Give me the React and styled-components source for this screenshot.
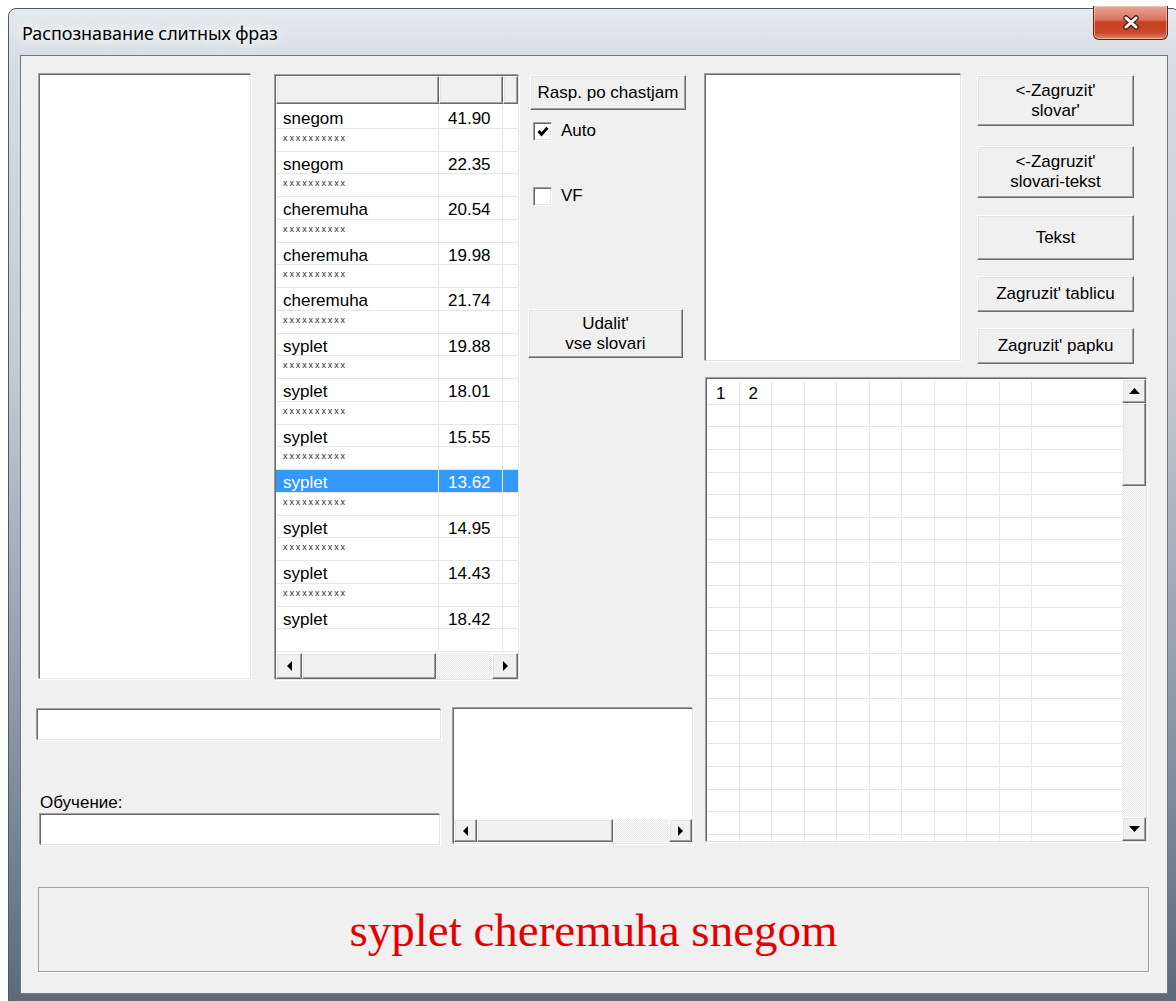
import React from 'react';
import styled, { createGlobalStyle, css } from 'styled-components';

const GlobalStyle = createGlobalStyle`
  html, body {
    margin: 0;
    padding: 0;
    background: #fff;
  }
  body {
    font-family: "Liberation Sans", Arial, sans-serif;
    color: #000;
  }
  * {
    box-sizing: border-box;
  }
`;

// classic 3D edges
const sunken = css`
  background: #fff;
  border: 1px solid;
  border-color: #696969 #e3e3e3 #e3e3e3 #696969;
  box-shadow: -1px -1px 0 #a0a0a0, 1px 1px 0 #fff;
`;

const raised = css`
  background: #f0f0f0;
  border: 1px solid;
  border-color: #fff #696969 #696969 #fff;
  box-shadow: inset -1px -1px 0 #a0a0a0, inset 1px 1px 0 #e3e3e3;
`;

const Screen = styled.div`
  width: 1176px;
  height: 1001px;
  overflow: hidden;
  padding: 8px 0 0 8px;
  background: #fff;
`;

const Window = styled.div`
  width: 1172px;
  height: 1000px;
  display: flex;
  flex-direction: column;
  padding: 0 11px;
  border: 1px solid #4e5a66;
  border-radius: 8px 8px 0 0;
  background: linear-gradient(
    180deg,
    #e6e9ed 0,
    #d7dce2 60px,
    #c3cad2 360px,
    #8d99a7 700px,
    #5a6878 1000px
  );
`;

const TitleBar = styled.div`
  height: 46px;
  flex: none;
  display: flex;
  align-items: center;
  justify-content: space-between;
  padding-left: 2px;
`;

const Caption = styled.div`
  font-family: "Noto Sans", "Open Sans", sans-serif;
  font-size: 18px;
  letter-spacing: -0.1px;
  color: #000;
  text-shadow: 0 0 8px #fff, 0 0 14px #fff, 0 0 20px #fff;
  margin-top: 2px;
`;

const CloseButton = styled.div`
  align-self: flex-start;
  margin-top: -3px;
  width: 75px;
  height: 34px;
  display: flex;
  align-items: center;
  justify-content: center;
  border: 1px solid #5c2418;
  border-top: none;
  border-radius: 0 0 6px 6px;
  background: linear-gradient(
    180deg,
    #e8a596 0,
    #d9775f 40%,
    #c73f22 50%,
    #c8472a 80%,
    #e08a6d 100%
  );
  box-shadow: inset 0 0 0 1px rgba(255, 220, 210, 0.55);
`;

const CloseGlyph = () => (
  <svg width="18" height="15" viewBox="0 0 18 15">
    <path d="M4 3 L14 12 M14 3 L4 12" stroke="#4a1c12" strokeWidth="5.5" strokeLinecap="round" />
    <path d="M4 3 L14 12 M14 3 L4 12" stroke="#fff" strokeWidth="3" strokeLinecap="round" />
  </svg>
);

const Client = styled.div`
  height: 939px;
  flex: none;
  display: flex;
  flex-direction: column;
  padding: 17px 0 0 15px;
  background: #f0f0f0;
  border: 1px solid #6d7884;
`;

const Main = styled.div`
  display: flex;
  gap: 10px;
`;

const LeftArea = styled.div`
  width: 658px;
  display: flex;
  flex-direction: column;
`;

const TopRow = styled.div`
  display: flex;
  align-items: flex-start;
`;

const ListBox = styled.div`
  ${sunken}
  width: ${(p) => p.$w}px;
  height: ${(p) => p.$h}px;
  margin: ${(p) => p.$mt || 0}px 0 0 ${(p) => p.$ml || 0}px;
  flex: none;
`;

/* word grid */

const WordGrid = styled.div`
  ${sunken}
  width: 244px;
  height: 605px;
  margin: 2px 0 0 24px;
  flex: none;
  display: flex;
  flex-direction: column;
  overflow: hidden;
`;

const GridHead = styled.div`
  display: flex;
  height: 28px;
  flex: none;
`;

const HeadCell = styled.div`
  ${raised}
  width: ${(p) => (p.$w ? `${p.$w}px` : 'auto')};
  flex: ${(p) => (p.$w ? 'none' : 1)};
`;

const GridBody = styled.div`
  flex: 1;
  padding-top: 2px;
  overflow: hidden;
`;

const GridRow = styled.div`
  display: flex;
  height: 22.75px;
`;

const WordCell = styled.div`
  width: ${(p) => (p.$w ? `${p.$w}px` : 'auto')};
  flex: ${(p) => (p.$w ? 'none' : 1)};
  border-right: ${(p) => (p.$w ? '1px solid #e6e6e6' : 'none')};
  border-bottom: 1px solid #e6e6e6;
  padding: 3px 0 0 ${(p) => p.$pad || 0}px;
  font-size: 17px;
  line-height: 20px;
  white-space: nowrap;
  overflow: hidden;
  background: ${(p) => (p.$sel ? '#3399ff' : '#fff')};
  color: ${(p) => (p.$sel ? '#fff' : '#000')};
`;

const Marks = styled.div`
  font-size: 9px;
  line-height: 10px;
  letter-spacing: 1.9px;
  color: #2a2a2a;
  margin-top: 1px;
`;

/* scroll bars */

const HScrollBar = styled.div`
  display: flex;
  height: ${(p) => p.$size}px;
  flex: none;
`;

const VScrollBar = styled.div`
  display: flex;
  flex-direction: column;
  width: ${(p) => p.$size}px;
  flex: none;
`;

const ScrollButton = styled.div`
  ${raised}
  width: ${(p) => p.$size}px;
  height: ${(p) => p.$size}px;
  flex: none;
  display: flex;
  align-items: center;
  justify-content: center;
`;

const Thumb = styled.div`
  ${raised}
  flex: none;
  ${(p) => (p.$vertical ? `height: ${p.$len}px;` : `width: ${p.$len}px;`)}
`;

const Track = styled.div`
  flex: 1;
  background: repeating-conic-gradient(#fdfdfd 0% 25%, #e6e6e6 0% 50%) 0 0 / 2px 2px;
`;

const Arrow = ({ dir }) => {
  const shapes = {
    up: { w: 11, h: 6, p: '0,6 5.5,0 11,6' },
    down: { w: 11, h: 6, p: '0,0 11,0 5.5,6' },
    left: { w: 5, h: 10, p: '5,0 5,10 0,5' },
    right: { w: 5, h: 10, p: '0,0 5,5 0,10' },
  };
  const s = shapes[dir];
  return (
    <svg width={s.w} height={s.h} viewBox={`0 0 ${s.w} ${s.h}`}>
      <polygon points={s.p} fill="#000" />
    </svg>
  );
};

const HScroll = ({ size, thumb }) => (
  <HScrollBar $size={size}>
    <ScrollButton $size={size}><Arrow dir="left" /></ScrollButton>
    <Thumb $len={thumb} />
    <Track />
    <ScrollButton $size={size}><Arrow dir="right" /></ScrollButton>
  </HScrollBar>
);

const VScroll = ({ size, thumb }) => (
  <VScrollBar $size={size}>
    <ScrollButton $size={size}><Arrow dir="up" /></ScrollButton>
    <Thumb $vertical $len={thumb} />
    <Track />
    <ScrollButton $size={size}><Arrow dir="down" /></ScrollButton>
  </VScrollBar>
);

/* buttons and checkboxes */

const Controls = styled.div`
  display: flex;
  flex-direction: column;
  align-items: flex-start;
  margin: 2px 0 0 9px;
`;

const PushButton = styled.div`
  ${raised}
  width: ${(p) => p.$w}px;
  height: ${(p) => p.$h}px;
  margin: ${(p) => p.$mt || 0}px 0 0 ${(p) => p.$ml || 0}px;
  flex: none;
  display: flex;
  align-items: center;
  justify-content: center;
  text-align: center;
  font-size: 17px;
  line-height: 20px;
  white-space: nowrap;
`;

const CheckRow = styled.div`
  display: flex;
  align-items: center;
  gap: 9px;
  margin: ${(p) => p.$mt}px 0 0 5px;
  font-size: 17px;
`;

const CheckBox = styled.span`
  width: 19px;
  height: 19px;
  display: flex;
  align-items: center;
  justify-content: center;
  background: #fff;
  border: 1px solid;
  border-color: #a0a0a0 #fff #fff #a0a0a0;
  box-shadow: inset 1px 1px 0 #696969, inset -1px -1px 0 #e3e3e3;
`;

const Check = () => (
  <svg width="12" height="11" viewBox="0 0 12 11">
    <path d="M1.5 5 L4.5 8.2 L10.5 1.8" fill="none" stroke="#000" strokeWidth="3" />
  </svg>
);

/* bottom-left fields */

const BottomRow = styled.div`
  display: flex;
  align-items: flex-start;
  margin-top: 28px;
`;

const EditColumn = styled.div`
  width: 406px;
  flex: none;
  display: flex;
  flex-direction: column;
  align-items: flex-start;
`;

const Edit = styled.div`
  ${sunken}
  width: ${(p) => p.$w}px;
  height: 31px;
  margin: ${(p) => p.$mt || 0}px 0 0 ${(p) => p.$ml || 0}px;
`;

const FieldLabel = styled.div`
  margin-top: 53px;
  padding-left: 4px;
  height: 20px;
  font-size: 17px;
  line-height: 20px;
`;

const ScrollList = styled.div`
  ${sunken}
  width: 240px;
  height: 136px;
  margin-left: 11px;
  display: flex;
  flex-direction: column;
  justify-content: flex-end;
  padding-bottom: 1px;
`;

/* right side */

const RightArea = styled.div`
  display: flex;
  flex-direction: column;
`;

const ButtonColumn = styled.div`
  display: flex;
  flex-direction: column;
  margin: 2px 0 0 16px;
`;

const TableGrid = styled.div`
  ${sunken}
  width: 441px;
  height: 464px;
  margin: 14px 0 0 2px;
  display: flex;
  overflow: hidden;
`;

const TableCells = styled.div`
  flex: 1;
  padding-top: 3px;
  overflow: hidden;
`;

const TableRow = styled.div`
  display: flex;
  height: 22.65px;
  border-bottom: 1px solid #e6e6e6;
`;

const TableCell = styled.div`
  width: 32.5px;
  flex: none;
  border-right: 1px solid #e6e6e6;
  padding: 1px 0 0 9px;
  font-size: 17px;
  line-height: 22px;
`;

const ResultPanel = styled.div`
  width: 1111px;
  height: 85px;
  margin: 42px 0 0 2px;
  display: flex;
  align-items: center;
  justify-content: center;
  border: 1px solid #a0a0a0;
  box-shadow: 1px 1px 0 #fff;
  font-family: "Liberation Serif", "Times New Roman", serif;
  font-size: 47px;
  color: #e40000;
`;

const words = [
  ['snegom', '41.90'],
  ['snegom', '22.35'],
  ['cheremuha', '20.54'],
  ['cheremuha', '19.98'],
  ['cheremuha', '21.74'],
  ['syplet', '19.88'],
  ['syplet', '18.01'],
  ['syplet', '15.55'],
  ['syplet', '13.62'],
  ['syplet', '14.95'],
  ['syplet', '14.43'],
  ['syplet', '18.42'],
];
const selectedWord = 8;

const WordRows = () => {
  const out = [];
  words.forEach(([word, score], i) => {
    const sel = i === selectedWord;
    out.push(
      <GridRow key={`w${i}`}>
        <WordCell $w={163} $pad={7} $sel={sel}>{word}</WordCell>
        <WordCell $w={64} $pad={9} $sel={sel}>{score}</WordCell>
        <WordCell $sel={sel} />
      </GridRow>
    );
    const last = i === words.length - 1;
    out.push(
      <GridRow key={`m${i}`}>
        <WordCell $w={163} $pad={7}>{!last && <Marks>xxxxxxxxxx</Marks>}</WordCell>
        <WordCell $w={64} />
        <WordCell />
      </GridRow>
    );
  });
  return out;
};

const TableRows = () =>
  Array.from({ length: 21 }, (_, r) => (
    <TableRow key={r}>
      {Array.from({ length: 10 }, (_, c) => (
        <TableCell key={c}>{r === 0 && c < 2 ? c + 1 : ''}</TableCell>
      ))}
    </TableRow>
  ));

export default function App() {
  return (
    <>
      <GlobalStyle />
      <Screen>
        <Window>
          <TitleBar>
            <Caption>Распознавание слитных фраз</Caption>
            <CloseButton>
              <CloseGlyph />
            </CloseButton>
          </TitleBar>
          <Client>
            <Main>
              <LeftArea>
                <TopRow>
                  <ListBox $w={212} $h={605} $mt={1} $ml={3} />
                  <WordGrid>
                    <GridHead>
                      <HeadCell $w={163} />
                      <HeadCell $w={64} />
                      <HeadCell />
                    </GridHead>
                    <GridBody>
                      <WordRows />
                    </GridBody>
                    <HScroll size={26} thumb={134} />
                  </WordGrid>
                  <Controls>
                    <PushButton $w={156} $h={35} $ml={2}>Rasp. po chastjam</PushButton>
                    <CheckRow $mt={11}>
                      <CheckBox><Check /></CheckBox>
                      Auto
                    </CheckRow>
                    <CheckRow $mt={45}>
                      <CheckBox />
                      VF
                    </CheckRow>
                    <PushButton $w={155} $h={49} $mt={103}>
                      Udalit'
                      <br />
                      vse slovari
                    </PushButton>
                  </Controls>
                </TopRow>
                <BottomRow>
                  <EditColumn>
                    <Edit $w={404} $ml={1} $mt={1} />
                    <FieldLabel>Обучение:</FieldLabel>
                    <Edit $w={400} $ml={4} $mt={1} />
                  </EditColumn>
                  <ScrollList>
                    <HScroll size={23} thumb={136} />
                  </ScrollList>
                </BottomRow>
              </LeftArea>
              <RightArea>
                <TopRow>
                  <ListBox $w={256} $h={287} $mt={1} $ml={1} />
                  <ButtonColumn>
                    <PushButton $w={157} $h={51}>
                      &lt;-Zagruzit'
                      <br />
                      slovar'
                    </PushButton>
                    <PushButton $w={157} $h={52} $mt={20}>
                      &lt;-Zagruzit'
                      <br />
                      slovari-tekst
                    </PushButton>
                    <PushButton $w={157} $h={45} $mt={17}>Tekst</PushButton>
                    <PushButton $w={157} $h={36} $mt={16}>Zagruzit' tablicu</PushButton>
                    <PushButton $w={157} $h={36} $mt={16}>Zagruzit' papku</PushButton>
                  </ButtonColumn>
                </TopRow>
                <TableGrid>
                  <TableCells>
                    <TableRows />
                  </TableCells>
                  <VScroll size={24} thumb={83} />
                </TableGrid>
              </RightArea>
            </Main>
            <ResultPanel>syplet cheremuha snegom</ResultPanel>
          </Client>
        </Window>
      </Screen>
    </>
  );
}
